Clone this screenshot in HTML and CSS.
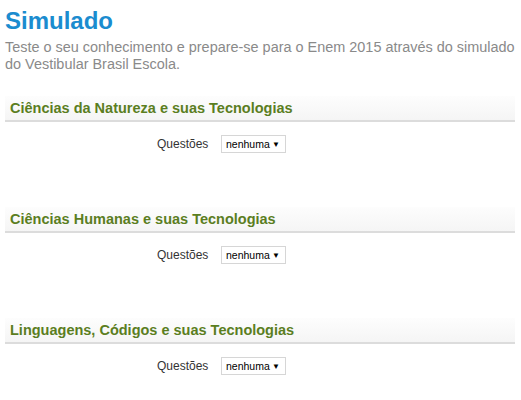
FILE: index.html
```html
<!DOCTYPE html>
<html lang="pt">
<head>
<meta charset="utf-8">
<link rel="stylesheet" href="styles.css">
</head>
<body>
<div class="page">
  <h1 class="title">Simulado</h1>
  <p class="intro">Teste o seu conhecimento e prepare-se para o Enem 2015 através do simulado do Vestibular Brasil Escola.</p>

  <section class="area">
    <h2 class="area-head">Ciências da Natureza e suas Tecnologias</h2>
    <div class="row">
      <span class="label">Questões</span>
      <span class="select"><span>nenhuma</span><span class="arrow">▼</span></span>
    </div>
  </section>

  <section class="area">
    <h2 class="area-head">Ciências Humanas e suas Tecnologias</h2>
    <div class="row">
      <span class="label">Questões</span>
      <span class="select"><span>nenhuma</span><span class="arrow">▼</span></span>
    </div>
  </section>

  <section class="area">
    <h2 class="area-head">Linguagens, Códigos e suas Tecnologias</h2>
    <div class="row">
      <span class="label">Questões</span>
      <span class="select"><span>nenhuma</span><span class="arrow">▼</span></span>
    </div>
  </section>
</div>
</body>
</html>
```

FILE: styles.css
```css
html, body {
  margin: 0;
  padding: 0;
  background: #fff;
}
body {
  font-family: "Liberation Sans", Arial, sans-serif;
}
.page {
  padding: 5px 6px 0 5px;
}
.title {
  margin: 0;
  font-size: 24px;
  line-height: 32px;
  font-weight: bold;
  color: #1b8ccf;
}
.intro {
  margin: 2px -6px 0 0;
  font-size: 14.45px;
  line-height: 17px;
  color: #8a8a8a;
}
.area {
  margin-top: 23px;
  height: 85px;
}
.area + .area {
  margin-top: 26px;
}
.area-head {
  margin: 0;
  height: 24px;
  padding-left: 5px;
  font-size: 14.5px;
  line-height: 25px;
  font-weight: bold;
  color: #5b7e1f;
  background: linear-gradient(#fdfdfd, #f5f5f5);
  border-bottom: 2px solid #dcdcdc;
}
.row {
  display: flex;
  align-items: center;
  margin-top: 13px;
  padding-left: 152px;
  height: 18px;
}
.label {
  font-size: 12px;
  color: #333;
  width: 64px;
}
.select {
  display: inline-flex;
  align-items: center;
  justify-content: space-between;
  box-sizing: border-box;
  width: 65px;
  height: 18px;
  padding: 0 5px 0 4px;
  border: 1px solid #d6d6d6;
  font-size: 10.5px;
  color: #000;
  background: #fff;
}
.arrow {
  font-size: 8px;
}
```
